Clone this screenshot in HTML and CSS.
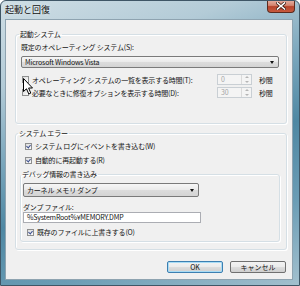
FILE: index.html
```html
<!DOCTYPE html>
<html lang="ja">
<head>
  <meta charset="UTF-8" />
  <title>起動と回復</title>
  <link rel="stylesheet" href="styles.css">
</head>
<body>
  <div class="window">
    <div class="titlebar">
      <span class="title">起動と回復</span>
      <div class="close">
        <svg width="10" height="8" viewBox="0 0 10 8">
          <path d="M1.5 1 L8.5 7 M8.5 1 L1.5 7" stroke="#3a1a12" stroke-width="3" stroke-linecap="square"/>
          <path d="M1.5 1 L8.5 7 M8.5 1 L1.5 7" stroke="#fff" stroke-width="1.6" stroke-linecap="square"/>
        </svg>
      </div>
    </div>

    <div class="client">
      <fieldset class="group startup">
        <legend>起動システム</legend>
        <div class="label">既定のオペレーティング システム(S):</div>
        <div class="combo os"><span>Microsoft Windows Vista</span><span class="arrow"></span></div>
        <div class="timer-row first">
          <div class="check"><span class="box"></span><span>オペレーティング システムの一覧を表示する時間(T):</span></div>
          <div class="spin"><span class="val">0</span><span class="spin-btns"><i class="up"></i><i class="down"></i></span></div>
          <span class="unit">秒間</span>
        </div>
        <div class="timer-row">
          <div class="check"><span class="box"></span><span>必要なときに修復オプションを表示する時間(D):</span></div>
          <div class="spin"><span class="val">30</span><span class="spin-btns"><i class="up"></i><i class="down"></i></span></div>
          <span class="unit">秒間</span>
        </div>
      </fieldset>

      <fieldset class="group failure">
        <legend>システム エラー</legend>
        <div class="check row-log"><span class="box on"></span><span>システム ログにイベントを書き込む(W)</span></div>
        <div class="check row-restart"><span class="box on"></span><span>自動的に再起動する(R)</span></div>

        <fieldset class="group debug">
          <legend>デバッグ情報の書き込み</legend>
          <div class="combo dump"><span>カーネル メモリ ダンプ</span><span class="arrow"></span></div>
          <div class="label dump-label">ダンプ ファイル:</div>
          <div class="textbox">%SystemRoot%¥MEMORY.DMP</div>
          <div class="check row-overwrite"><span class="box on"></span><span>既存のファイルに上書きする(O)</span></div>
        </fieldset>
      </fieldset>

      <div class="buttons">
        <button class="btn default">OK</button>
        <button class="btn">キャンセル</button>
      </div>
    </div>

    <svg class="cursor" width="11" height="17" viewBox="0 0 11 17">
      <path d="M0.5 0.5 L0.5 13.5 L3.5 10.8 L5.8 16 L7.8 15.1 L5.6 10 L9.5 10 Z" fill="#fff" stroke="#000" stroke-width="1" stroke-linejoin="miter"/>
    </svg>
  </div>
</body>
</html>
```

FILE: styles.css
```css
body {
  margin: 0;
  background: #fff;
  font-family: "Noto Sans CJK JP", "Noto Sans", sans-serif;
  color: #141414;
}
.window {
  position: relative;
  width: 300px;
  height: 286px;
  box-sizing: border-box;
  border: 1px solid #3f5666;
  border-radius: 6px 6px 0 0;
  background: linear-gradient(160deg, #cfdee5 0%, #b3cbd7 22%, #78a5bb 42%, #4f88a3 58%, #6b9db5 78%, #a3c0ce 100%);
  display: flex;
  flex-direction: column;
  overflow: hidden;
}
.titlebar {
  height: 18px;
  display: flex;
  align-items: center;
}
.title {
  padding-left: 4px;
  font-size: 9px;
  line-height: 12px;
  color: #111;
  text-shadow: 0 0 3px rgba(255,255,255,0.8);
}
.close {
  position: absolute;
  top: -1px;
  right: 4px;
  width: 28px;
  height: 13px;
  box-sizing: border-box;
  border: 1px solid #5b2a1e;
  border-top: none;
  border-radius: 0 0 4px 4px;
  background: linear-gradient(#e6b3a6 0%, #d48570 45%, #b6432b 55%, #c75a3e 100%);
  display: flex;
  align-items: center;
  justify-content: center;
}
.client {
  flex: 1;
  margin: 0 6px 5px 4px;
  box-sizing: border-box;
  border: 1px solid #8ea3b0;
  background: #f0f0f0;
  padding: 8px 5px 6px 9px;
  font-size: 7px;
  letter-spacing: -0.2px;
  display: flex;
  flex-direction: column;
}
.group {
  margin: 0;
  border: 1px solid #d5dfe5;
  border-radius: 3px;
  min-inline-size: 0;
  box-shadow: inset 1px 1px 0 #fff, 1px 1px 0 #fff;
}
.group legend {
  font-size: 7px;
  line-height: 12px;
  padding: 0 1px;
  margin-left: -2px;
}
.startup {
  padding: 2px 7px 25px 5px;
}
.failure {
  margin-top: 3px;
  padding: 2px 6px 7px 4px;
}
.debug {
  margin-top: 3px;
  padding: 3px 2px 4px 2px;
}
.label {
  line-height: 10px;
}
.combo {
  height: 12px;
  box-sizing: border-box;
  border: 1px solid #7a7a7a;
  border-radius: 2px;
  background: linear-gradient(#f6f6f6 0%, #eaeaea 50%, #dcdcdc 51%, #d4d4d4 100%);
  display: flex;
  align-items: center;
  justify-content: space-between;
  padding: 0 4px 0 3px;
  line-height: 10px;
}
.combo .arrow {
  width: 0;
  height: 0;
  border-left: 2.5px solid transparent;
  border-right: 2.5px solid transparent;
  border-top: 3px solid #111;
}
.os {
  margin-top: 4px;
}
.dump {
  width: 176px;
  height: 14px;
}
.timer-row {
  display: grid;
  grid-template-columns: 189px 35px auto;
  column-gap: 7px;
  align-items: center;
  height: 11px;
  margin-top: 2px;
}
.timer-row.first {
  margin-top: 6px;
}
.check {
  display: flex;
  align-items: center;
  gap: 3px;
  line-height: 10px;
  white-space: nowrap;
}
.check .box {
  width: 7px;
  height: 7px;
  box-sizing: border-box;
  border: 1px solid #8e8f8f;
  background: linear-gradient(135deg, #dcdcdc, #fbfbfb);
  margin-left: 1px;
  flex: none;
}
.check .box.on {
  position: relative;
}
.check .box.on::after {
  content: "";
  position: absolute;
  left: 1px;
  top: 0;
  width: 2px;
  height: 3px;
  border-right: 1.2px solid #3c4f8f;
  border-bottom: 1.2px solid #3c4f8f;
  transform: rotate(40deg);
}
.spin {
  height: 11px;
  box-sizing: border-box;
  border: 1px solid #c9cfd4;
  background: #f4f4f4;
  display: flex;
  justify-content: space-between;
  color: #a6a6a6;
  line-height: 9px;
}
.spin .val {
  padding-left: 3px;
}
.spin-btns {
  width: 9px;
  display: flex;
  flex-direction: column;
  border-left: 1px solid #dadada;
}
.spin-btns i {
  flex: 1;
  display: flex;
  align-items: center;
  justify-content: center;
}
.spin-btns .up::after {
  content: "";
  border-left: 2px solid transparent;
  border-right: 2px solid transparent;
  border-bottom: 2px solid #b5b5b5;
}
.spin-btns .down::after {
  content: "";
  border-left: 2px solid transparent;
  border-right: 2px solid transparent;
  border-top: 2px solid #b5b5b5;
}
.unit {
  line-height: 10px;
}
.row-log {
  margin-left: 4px;
}
.row-restart {
  margin-left: 4px;
  margin-top: 4px;
}
.dump-label {
  margin-top: 5px;
}
.textbox {
  width: 178px;
  height: 11px;
  box-sizing: border-box;
  border: 1px solid #abadb3;
  background: #fff;
  padding-left: 3px;
  line-height: 9px;
}
.row-overwrite {
  margin-top: 4px;
  margin-left: 3px;
}
.buttons {
  margin-top: auto;
  display: flex;
  justify-content: flex-end;
  gap: 7px;
  padding-right: 1px;
}
.btn {
  width: 56px;
  height: 12px;
  padding: 0;
  font-family: inherit;
  font-size: 7px;
  line-height: 10px;
  color: #111;
  border: 1px solid #707070;
  border-radius: 2px;
  background: linear-gradient(#f2f2f2 0%, #ebebeb 50%, #dddddd 51%, #cfcfcf 100%);
}
.btn.default {
  border-color: #3c7fb1;
  box-shadow: inset 0 0 0 1px #a9dcf5;
}
.cursor {
  position: absolute;
  left: 22px;
  top: 77px;
}
```
